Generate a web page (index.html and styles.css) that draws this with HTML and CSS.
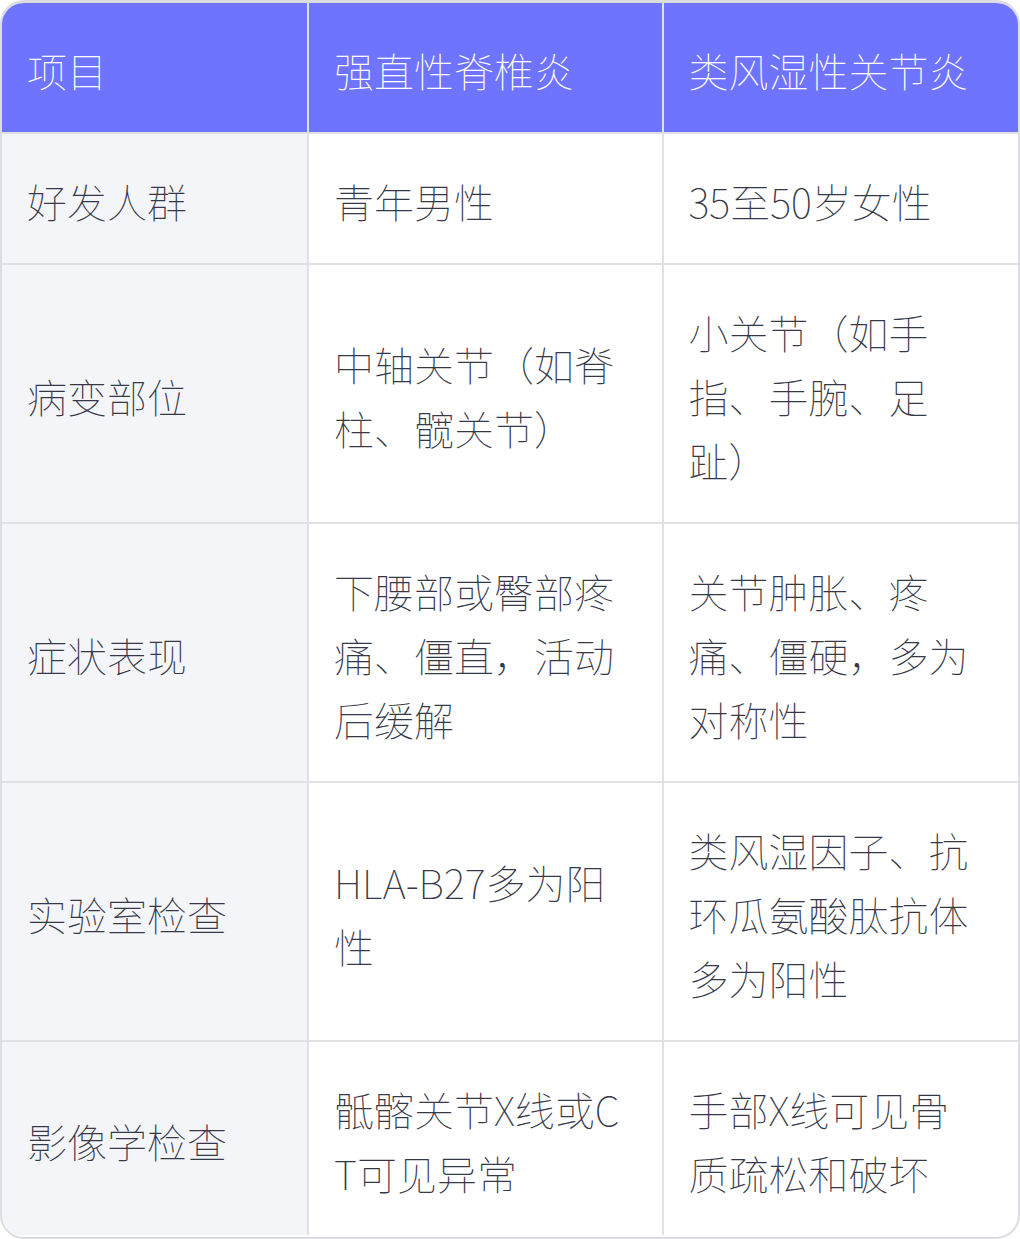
FILE: index.html
```html
<!DOCTYPE html>
<html lang="zh-CN">
<head>
<meta charset="utf-8">
<link rel="stylesheet" href="styles.css">
</head>
<body>
<div class="card">
<table class="cmp">
<thead>
<tr><th class="c1">项目</th><th>强直性脊椎炎</th><th>类风湿性关节炎</th></tr>
</thead>
<tbody>
<tr><td class="c1">好发人群</td><td>青年男性</td><td>35至50岁女性</td></tr>
<tr><td class="c1">病变部位</td><td>中轴关节（如脊柱、髋关节）</td><td>小关节（如手指、手腕、足趾）</td></tr>
<tr><td class="c1">症状表现</td><td>下腰部或臀部疼痛、僵直，活动后缓解</td><td>关节肿胀、疼痛、僵硬，多为对称性</td></tr>
<tr><td class="c1">实验室检查</td><td>HLA-B27多为阳性</td><td>类风湿因子、抗环瓜氨酸肽抗体多为阳性</td></tr>
<tr><td class="c1">影像学检查</td><td>骶髂关节X线或CT可见异常</td><td>手部X线可见骨质疏松和破坏</td></tr>
</tbody>
</table>
</div>
</body>
</html>
```
FILE: styles.css
```css
html, body {
  margin: 0;
  padding: 0;
  background: #ffffff;
}
.card {
  width: 1020px;
  height: 1239px;
  box-sizing: border-box;
  border: 2px solid #dcdde2;
  border-top-width: 3px;
  border-radius: 24px;
  overflow: hidden;
  background: #ffffff;
}
.cmp {
  width: 100%;
  border-collapse: separate;
  border-spacing: 0;
  table-layout: fixed;
  font-family: "Noto Sans CJK SC", "Noto Sans", sans-serif;
  font-size: 40px;
  font-weight: 100;
  line-height: 64px;
  color: #353847;
}
.cmp th, .cmp td {
  text-align: left;
  vertical-align: middle;
  padding: 35px 40px 30px 25px;
  border-right: 2px solid #e0e1e5;
  border-bottom: 2px solid #e0e1e5;
  word-break: break-all;
}
.cmp th:last-child, .cmp td:last-child {
  border-right: none;
}
.cmp tbody tr:last-child td {
  border-bottom: none;
}
.cmp th {
  background: #6f74ff;
  color: #ffffff;
  font-weight: 100;
}
.cmp th.c1, .cmp td.c1 {
  width: 307px;
  box-sizing: border-box;
}
.cmp td.c1 {
  background: #f4f5f9;
}
```
